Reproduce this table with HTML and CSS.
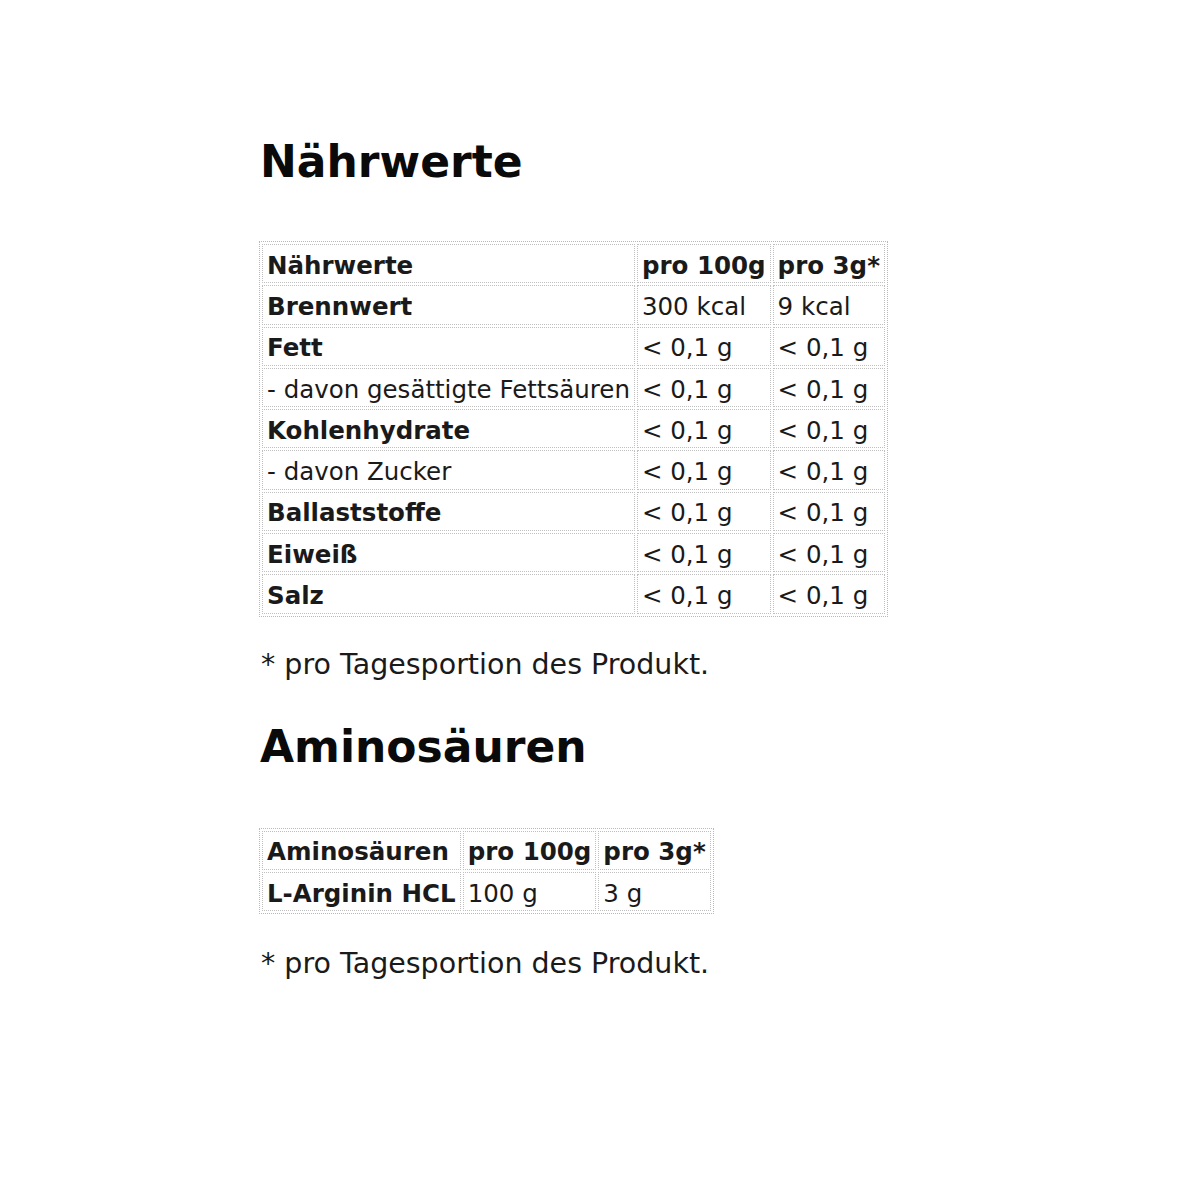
FILE: index.html
```html
<!DOCTYPE html>
<html>
<head>
<meta charset="utf-8">
<link rel="stylesheet" href="styles.css">
</head>
<body>
<div class="page">
  <h2 class="title">Nährwerte</h2>
  <table class="nt">
    <tr><th>Nährwerte</th><th>pro 100g</th><th>pro 3g*</th></tr>
    <tr><th>Brennwert</th><td>300 kcal</td><td>9 kcal</td></tr>
    <tr><th>Fett</th><td>&lt; 0,1 g</td><td>&lt; 0,1 g</td></tr>
    <tr><td>- davon gesättigte Fettsäuren</td><td>&lt; 0,1 g</td><td>&lt; 0,1 g</td></tr>
    <tr><th>Kohlenhydrate</th><td>&lt; 0,1 g</td><td>&lt; 0,1 g</td></tr>
    <tr><td>- davon Zucker</td><td>&lt; 0,1 g</td><td>&lt; 0,1 g</td></tr>
    <tr><th>Ballaststoffe</th><td>&lt; 0,1 g</td><td>&lt; 0,1 g</td></tr>
    <tr><th>Eiweiß</th><td>&lt; 0,1 g</td><td>&lt; 0,1 g</td></tr>
    <tr><th>Salz</th><td>&lt; 0,1 g</td><td>&lt; 0,1 g</td></tr>
  </table>
  <p class="note">* pro Tagesportion des Produkt.</p>
  <h2 class="title">Aminosäuren</h2>
  <table class="nt nt-amino">
    <tr><th>Aminosäuren</th><th>pro 100g</th><th>pro 3g*</th></tr>
    <tr><th>L-Arginin HCL</th><td>100 g</td><td>3 g</td></tr>
  </table>
  <p class="note note-last">* pro Tagesportion des Produkt.</p>
</div>
</body>
</html>
```

FILE: styles.css
```css
html, body {
  margin: 0;
  padding: 0;
  background: #ffffff;
}
.page {
  padding: 138px 0 0 259px;
  font-family: "DejaVu Sans", Verdana, sans-serif;
  color: #111111;
}
.title {
  margin: 0 0 0 1px;
  font-size: 44px;
  font-weight: bold;
  line-height: 48px;
  color: #0a0a0a;
}
.nt {
  border-collapse: separate;
  border-spacing: 2px;
  border: 1px dotted #b8b8b8;
  margin-top: 55px;
  font-size: 24.5px;
}
.nt-amino {
  margin-top: 57px;
}
.nt th, .nt td {
  border: 1px dotted #bfbfbf;
  padding: 3px 4px 0 4px;
  height: 34.3px;
  text-align: left;
  vertical-align: middle;
  white-space: nowrap;
  color: #1a1a1a;
}
.nt th {
  font-weight: bold;
}
.note {
  margin: 30px 0 40px 2px;
  font-size: 28.5px;
  line-height: 36px;
  color: #1a1a1a;
}
.note-last {
  margin-top: 32px;
}
```
